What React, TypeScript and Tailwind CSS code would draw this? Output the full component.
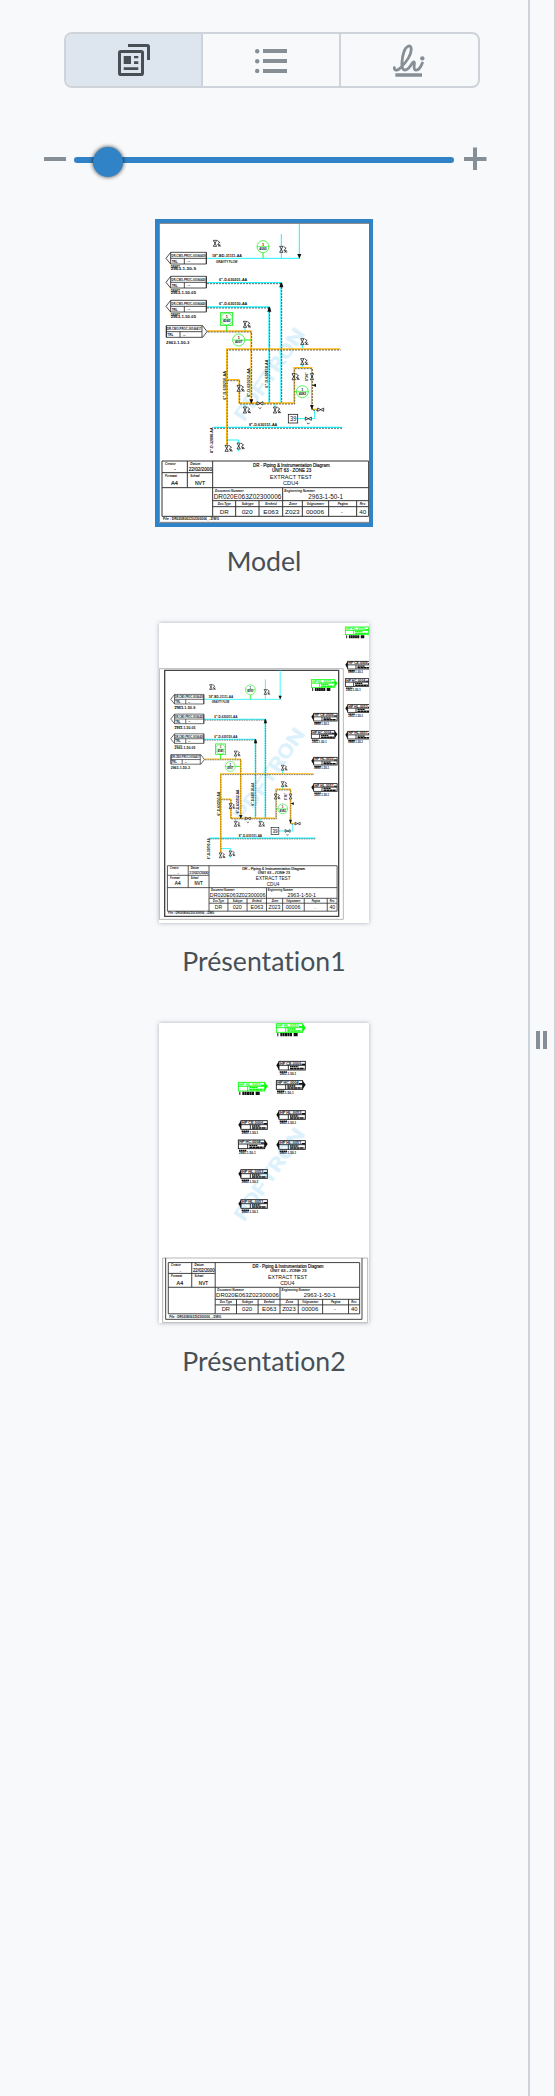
import React, { type ReactNode } from 'react';

const CYAN = '#1ff4fb';
const ORANGE = '#ffb90f';
const GREEN = '#1cf01c';

type LabelProps = {
  x: number;
  y: number;
  w?: number;
  size?: number;
  children: ReactNode;
  vertical?: boolean;
  fill?: string;
  italic?: boolean;
  bold?: boolean;
};

/* x is the left edge of the text; a vertical label reads upwards from (x, y). */
function Label({ x, y, w, size = 10, children, vertical, fill = '#111', italic, bold }: LabelProps) {
  return (
    <text
      x={x}
      y={y}
      fontSize={size}
      textLength={w}
      lengthAdjust="spacingAndGlyphs"
      fill={fill}
      fontStyle={italic ? 'italic' : undefined}
      fontWeight={bold ? 700 : 400}
      transform={vertical ? `rotate(-90 ${x} ${y})` : undefined}
    >
      {children}
    </text>
  );
}

function Pipe({ d, color }: { d: string; color: string }) {
  return (
    <g fill="none">
      <path d={d} stroke={color} strokeWidth="4" />
      <path d={d} stroke="#222" strokeWidth="2" strokeDasharray="6 3" transform="translate(2 3)" />
    </g>
  );
}

function Valve({ x, y, flat, tag = true }: { x: number; y: number; flat?: boolean; tag?: boolean }) {
  return (
    <g transform={`translate(${x} ${y})`}>
      <path
        d="M-5 -9H5L-5 9H5Z"
        transform={flat ? 'rotate(90)' : undefined}
        fill="#fff"
        stroke="#111"
        strokeWidth="2.2"
      />
      {tag && !flat && (
        <path d="M7 -9L14 -3M9 1L15 -4M7 3H12V8H18M9 9L16 3" fill="none" stroke="#111" strokeWidth="2.2" />
      )}
      {tag && flat && <path d="M-4 12L-1 16L4 13" fill="none" stroke="#111" strokeWidth="2" />}
    </g>
  );
}

function Gauge({ x, y, code }: { x: number; y: number; code: string }) {
  return (
    <g>
      <circle cx={x} cy={y} r="18" fill="#fff" stroke={GREEN} strokeWidth="2.2" />
      <path d={`M${x - 18} ${y}H${x + 18}`} stroke={GREEN} strokeWidth="2" />
      <Label x={x - 3} y={y - 3} size={11} bold>1</Label>
      <Label x={x - 11} y={y + 10} w={22} size={11} bold>{code}</Label>
    </g>
  );
}

function Tag({ y, code, sheet, right }: { y: number; code: string; sheet: string; right?: boolean }) {
  const x = right ? 22 : 35;
  const outline = right
    ? `M22 ${y}H131L144 ${y + 18}L131 ${y + 35}H22Z`
    : `M35 ${y}H142V${y + 35}H35L21 ${y + 18}Z`;
  return (
    <g>
      <path d={outline} fill="#fff" stroke="#222" strokeWidth="2.4" />
      <path
        d={`M${x} ${y}V${y + 35}M${x} ${y + 18}H${x + 107}M${x + 41} ${y + 18}V${y + 35}M${x + 107} ${y}V${y + 35}`}
        stroke="#222"
        strokeWidth="2.4"
      />
      <Label x={x + 2} y={y + 14} w={103} size={12} bold>{code}</Label>
      <Label x={x + 3} y={y + 31} w={18} size={10} bold>TRL</Label>
      <Label x={x + 50} y={y + 30} w={8} size={10} bold>--</Label>
      {!right && <Label x={x} y={y + 46} w={28} size={9} bold>DRAFT</Label>}
      <Label x={x - (right ? 1 : 0)} y={y + 54} w={right ? 70 : 76} size={12} bold>{sheet}</Label>
    </g>
  );
}

function Diagram() {
  return (
    <g>
      <g fill="none" stroke={CYAN} strokeWidth="3">
        <path d="M142 106H421V0M367 33V106" />
        <path d="M204 651H239V685M467 560V587H415M258 312V325M430 364V379M430 424V435M258 541V552M348 541V552" />
      </g>
      <Pipe d="M142 179H366V540" color={CYAN} />
      <Pipe d="M142 252H330V540" color={CYAN} />
      <Pipe d="M163 613H550" color={CYAN} />
      <Pipe d="M144 324H276V540" color={ORANGE} />
      <Pipe d="M203 670V378H543" color={ORANGE} />
      <Pipe d="M203 470H240V540H405V434H458V559H478" color={ORANGE} />
      <g fill="#111">
        <path d="M415 93H427L421 107Z" />
        <path d="M361 193H373L369 179H365Z" />
        <path d="M325 266H337L333 252H329Z" />
        <path d="M271 529H283L277 543Z" />
        <path d="M453 546H464L459 560Z" />
        <path d="M459 487L471 482V492Z" />
      </g>
      <g fill="none" stroke={GREEN} strokeWidth="3">
        <path d="M312 89V106M203 306V325M258 351H277M406 506H412" />
        <rect x="185" y="269" width="36" height="38" />
      </g>
      <Gauge x={312} y={71} code="4000" />
      <Gauge x={203} y={288} code="4040" />
      <Gauge x={239} y={351} code="4007" />
      <Gauge x={430} y={506} code="4082" />
      <Valve x={168} y={61} />
      <Valve x={367} y={79} />
      <Valve x={258} y={304} />
      <Valve x={430} y={356} />
      <Valve x={430} y={416} />
      <Valve x={239} y={496} />
      <Valve x={258} y={561} />
      <Valve x={303} y={541} flat />
      <Valve x={348} y={561} />
      <Valve x={404} y={461} />
      <Valve x={459} y={461} tag={false} />
      <Valve x={485} y={560} flat tag={false} />
      <Valve x={448} y={587} flat />
      <Valve x={203} y={676} />
      <Valve x={239} y={669} />
      <Label x={446} y={474} w={26} size={11} vertical bold>8"X6"</Label>
      <rect x="388" y="574" width="28" height="26" fill="#fff" stroke="#222" strokeWidth="2.4" />
      <Label x={393} y={594} w={19} size={19}>39</Label>
      <Tag y={88} code="DR-CMO-PROC-00166419" sheet="2963-1-50-9" />
      <Tag y={160} code="DR-CMO-PROC-00166420" sheet="2963-1-50-05" />
      <Tag y={232} code="DR-CMO-PROC-00166420" sheet="2963-1-50-05" />
      <Tag y={308} code="DR-CMO-PROC-00166417" sheet="2963-1-50-3" right />
      <Label x={159} y={102} w={90} size={12} bold>18"-BD-31111-AA</Label>
      <Label x={171} y={119} w={64} size={12} bold>GRAVITY FLOW</Label>
      <Label x={180} y={175} w={85} size={12} bold>6"-D-630201-AA</Label>
      <Label x={180} y={247} w={85} size={12} bold>6"-D-630150-AA</Label>
      <Label x={200} y={530} w={86} size={12} vertical bold>6"-D-630250-AA</Label>
      <Label x={272} y={522} w={86} size={12} vertical bold>6"-D-630252-AA</Label>
      <Label x={327} y={494} w={84} size={12} vertical bold>6"-D-630150-AA</Label>
      <Label x={163} y={690} w={77} size={12} vertical bold>8"-D-32090-AA</Label>
      <Label x={270} y={610} w={85} size={12} bold>8"-D-630151-AA</Label>
    </g>
  );
}

function TitleBlock() {
  return (
    <g>
      <path
        d="M9 714H629V880H9ZM9 749H161M85 714V794M161 714V880M9 794H629M161 833H629M161 851H629M371 794V880M230 833V880M300 833V880M430 833V880M509 833V880M593 833V880"
        fill="#fff"
        stroke="#333"
        strokeWidth="3"
      />
      <Label x={18} y={725} w={32} size={10} italic bold>Creator</Label>
      <Label x={94} y={725} w={30} size={10} italic bold>Datum</Label>
      <Label x={46} y={744} size={14} bold>-</Label>
      <g stroke="#111" strokeWidth="0.5">
        <Label x={89} y={744} w={70} size={15}>22/02/2000</Label>
        <Label x={36} y={786} w={21} size={18}>A4</Label>
        <Label x={108} y={786} w={30} size={18}>NVT</Label>
        <Label x={282} y={731} w={230} size={15}>DR - Piping &amp; Instrumentation Diagram</Label>
        <Label x={339} y={746} w={118} size={14}>UNIT 63 - ZONE 23</Label>
      </g>
      <Label x={18} y={762} w={36} size={10} italic bold>Formaat</Label>
      <Label x={94} y={762} w={28} size={10} italic bold>Schaal</Label>
      <Label x={332} y={767} w={127} size={17}>EXTRACT TEST</Label>
      <Label x={372} y={787} w={46} size={17}>CDU4</Label>
      <Label x={168} y={806} w={86} size={10} italic bold>Document Nummer</Label>
      <Label x={376} y={806} w={92} size={10} italic bold>Engineering Nummer</Label>
      <Label x={164} y={827} w={203} size={19}>DR020E063Z02300006</Label>
      <Label x={448} y={827} w={104} size={19}>2963-1-50-1</Label>
      <Label x={176} y={845} w={40} size={10} italic bold>Doc.Type</Label>
      <Label x={248} y={845} w={36} size={10} italic bold>Subtype</Label>
      <Label x={319} y={845} w={34} size={10} italic bold>Eenheid</Label>
      <Label x={390} y={845} w={24} size={10} italic bold>Zone</Label>
      <Label x={443} y={845} w={52} size={10} italic bold>Volgnummer</Label>
      <Label x={536} y={845} w={30} size={10} italic bold>Pagina</Label>
      <Label x={602} y={845} w={18} size={10} italic bold>Rev.</Label>
      <Label x={182} y={872} w={27} size={18}>DR</Label>
      <Label x={248} y={872} w={33} size={18}>020</Label>
      <Label x={313} y={872} w={46} size={18}>E063</Label>
      <Label x={378} y={872} w={44} size={18}>Z023</Label>
      <Label x={441} y={872} w={54} size={18}>00006</Label>
      <Label x={546} y={872} size={16}>-</Label>
      <Label x={601} y={872} w={21} size={18}>40</Label>
      <Label x={12} y={892} w={168} size={12} bold>File : DR020E063Z02300006_-.DWG</Label>
    </g>
  );
}

function Watermark() {
  return (
    <text
      x="0"
      y="0"
      fontSize="56"
      fontFamily="Roboto, sans-serif"
      fontWeight="500"
      textLength="324"
      lengthAdjust="spacingAndGlyphs"
      fill="#0aa5ee"
      stroke="#0aa5ee"
      strokeWidth="2"
      opacity="0.14"
      transform="translate(254 598) rotate(-55)"
    >
      PDFTRON
    </text>
  );
}

type FlagKind = 'green' | 'left' | 'right';

function Flag({ x, y, kind, code, scale = 1 }: { x: number; y: number; kind: FlagKind; code: string; scale?: number }) {
  const left = kind === 'left';
  const color = kind === 'green' ? '#0f0' : '#111';
  const bx = left ? 8 : 0;
  return (
    <g transform={`translate(${x} ${y}) scale(${scale})`}>
      <rect x={bx} y="1" width="79" height="26" fill="#fff" stroke={color} strokeWidth="2.6" />
      <path d={left ? 'M8 1L0 13L8 27Z' : 'M79 1L88 13L79 27Z'} fill={color} />
      <path d={`M${bx} 13H${bx + 79}M${bx + 28} 13V27`} stroke={color} strokeWidth="2.6" />
      <Label x={bx + 3} y={11} w={64} size={12} fill={color} bold>{code}</Label>
      <path d={`M${bx + 68} 10H${bx + 78}`} stroke={color} strokeWidth="4" />
      <path d={`M${bx + 33} 17H${bx + 58}`} stroke={color} strokeWidth="4" strokeDasharray="5 1" />
      <path d={`M${bx + 33} 23H${bx + 76}`} stroke={color} strokeWidth="5" strokeDasharray="9 1" />
      {kind === 'green' ? (
        <path d="M3 34H64" stroke="#111" strokeWidth="10" strokeDasharray="3 6 6 1 6 1 6 1 6 1 7 5 14 2" />
      ) : (
        <g>
          <path d={`M${bx + 2} 33H${bx + 24}`} stroke="#111" strokeWidth="5" strokeDasharray="5 1" />
          <Label x={bx + 2} y={42} w={50} size={10} bold>2963-1-50-1</Label>
        </g>
      )}
    </g>
  );
}

const flagKinds: FlagKind[] = ['green', 'left', 'right', 'left', 'left'];
const flagCodes = ['HP HL-0050', 'HP CE-0006', 'HP HC-0004', 'HP HL-0052', 'HP HL-0051'];

function FlagColumn({ x, rows, scale }: { x: number; rows: number[]; scale?: number }) {
  return (
    <g>
      {rows.map((y, i) => (
        <Flag key={y} x={x} y={y} kind={flagKinds[i]} code={flagCodes[i]} scale={scale} />
      ))}
    </g>
  );
}

function Sheet({ children }: { children: ReactNode }) {
  return (
    <svg
      width="210"
      height="300"
      viewBox="0 0 630 900"
      className="block bg-white"
      fontFamily="'Liberation Sans', Arial, sans-serif"
    >
      {children}
    </svg>
  );
}

function Thumbnail({ name, selected, children }: { name: string; selected?: boolean; children: ReactNode }) {
  return (
    <button type="button" className="flex h-[400px] w-[218px] flex-col items-center">
      <span
        className={
          selected
            ? 'block border-4 border-[#3183c8]'
            : 'm-1 block shadow-[0_0_4px_rgba(90,105,120,0.5)]'
        }
      >
        {children}
      </span>
      <span className="mt-4 text-[26.67px] leading-[36px] text-[#485056] [font-variant-ligatures:none]">{name}</span>
    </button>
  );
}

function Tabs() {
  return (
    <div className="flex h-14 w-[416px] overflow-hidden rounded-lg border-2 border-[#ced4da]">
      <button type="button" aria-label="Thumbnails" className="flex w-[137px] items-center justify-center border-r-2 border-[#ced4da] bg-[#dde5ee]">
        <svg width="32" height="32" viewBox="0 0 32 32" fill="#485056">
          <path d="M10 0H29.5Q32 0 32 2.5V16H29V3H10Z" />
          <rect x="1.5" y="7.5" width="23" height="23" rx="1.3" fill="none" stroke="#485056" strokeWidth="3" />
          <path d="M5.7 12H13V20H5.7ZM16 12H20.3V14.3H16ZM16 17.3H20.3V20H16ZM5.7 23.3H20.3V26H5.7Z" />
        </svg>
      </button>
      <button type="button" aria-label="Outlines" className="flex w-[138px] items-center justify-center border-r-2 border-[#ced4da] pt-0.5">
        <svg width="32" height="24" viewBox="0 0 32 24" fill="#868e96">
          <circle cx="2.2" cy="2.2" r="2.2" />
          <circle cx="2.2" cy="12.2" r="2.2" />
          <circle cx="2.2" cy="22" r="2.2" />
          <path d="M8 0H32V4H8ZM8 10H32V14H8ZM8 20H32V24H8Z" />
        </svg>
      </button>
      <button type="button" aria-label="Signatures" className="flex flex-1 items-center justify-center">
        <svg width="33" height="33" viewBox="309 103 99 99" fill="none" stroke="#868e96" strokeLinecap="round" strokeLinejoin="round" strokeWidth="8.5">
          <path d="M313 174C313 185 323 183 331 175C348 158 367 133 363 114C360 104 349 109 343 123C335 143 331 181 345 181C358 181 362 164 370 157C378 154 367 178 376 181C386 183 393 171 397 160" />
          <circle cx="397" cy="146" r="6.5" fill="#868e96" stroke="none" />
          <path d="M316 191H396V201H316Z" fill="#868e96" stroke="none" />
        </svg>
      </button>
    </div>
  );
}

function ZoomSlider() {
  return (
    <div className="flex h-8 items-center">
      <svg width="22" height="24" viewBox="0 0 22 24" className="mb-1 block">
        <path d="M0 11H22V15H0Z" fill="#868e96" />
      </svg>
      <div className="relative ml-2 h-1.5 w-[380px] rounded-full bg-[#3183c8]">
        <div className="absolute top-[-10.5px] left-[19px] size-[30px] rounded-full bg-[#3183c8] shadow-[0_0_4px_rgba(0,0,0,0.8)]" />
      </div>
      <svg width="23" height="24" viewBox="0 0 23 24" className="mb-1 ml-2.5 block">
        <path d="M0 11H22.5V15H0ZM9 1.5H13V24H9Z" fill="#868e96" />
      </svg>
    </div>
  );
}

export default function App() {
  return (
    <div className="flex h-[2096px] w-[556px] bg-[#f8f9fb] font-[Lato,sans-serif]">
      <aside className="flex w-[528px] flex-col">
        <div className="pt-8 pl-16">
          <Tabs />
        </div>
        <div className="mt-14 pl-11">
          <ZoomSlider />
        </div>
        <div className="mt-[43px] flex flex-col pl-[155px]">
          <Thumbnail name="Model" selected>
            <Sheet>
              <Watermark />
              <Diagram />
              <TitleBlock />
              <path d="M1 0V898H630" fill="none" stroke="#777" strokeWidth="3" />
              <path d="M0 1H630" stroke="#777" strokeWidth="3" />
            </Sheet>
          </Thumbnail>
          <Thumbnail name="Présentation1">
            <Sheet>
              <path d="M1 137H553V889H1Z" fill="none" stroke="#b8b8b8" strokeWidth="3" />
              <path d="M17 142H539V880H17Z" fill="none" stroke="#444" strokeWidth="4" />
              <Watermark />
              <g transform="translate(17.9 142) scale(.821)">
                <Diagram />
                <TitleBlock />
              </g>
              <FlagColumn x={457} rows={[169, 270, 322, 402, 481]} scale={0.89} />
              <FlagColumn x={559} rows={[11, 114, 166, 244, 324]} scale={0.89} />
            </Sheet>
          </Thumbnail>
          <Thumbnail name="Présentation2">
            <Sheet>
              <FlagColumn x={352} rows={[1, 114, 172, 262, 352]} />
              <FlagColumn x={238} rows={[177, 292, 350, 439, 529]} />
              <Watermark />
              <path d="M11 705H626V899H11Z" fill="none" stroke="#b8b8b8" strokeWidth="3" />
              <path d="M20 705V889H609V705" fill="none" stroke="#444" strokeWidth="3" />
              <g transform="translate(19.5 57.6) scale(.926)">
                <TitleBlock />
              </g>
            </Sheet>
          </Thumbnail>
        </div>
      </aside>
      <div className="flex w-7 items-center justify-center border-x-2 border-[#ced4da]">
        <div className="mt-[-16px] mr-px flex gap-[3px]">
          <div className="h-[18px] w-1 bg-[#868e96]" />
          <div className="h-[18px] w-1 bg-[#868e96]" />
        </div>
      </div>
    </div>
  );
}
